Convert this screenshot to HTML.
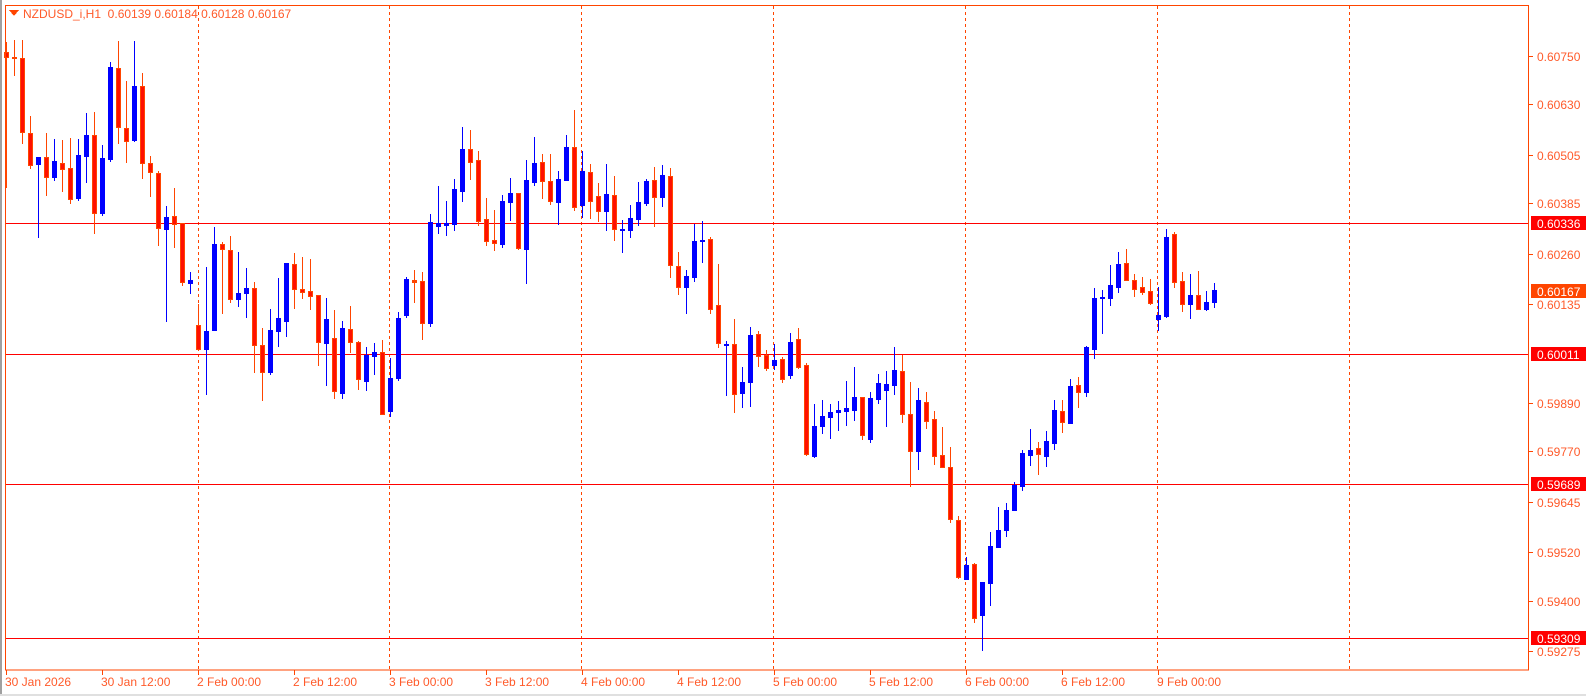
<!DOCTYPE html>
<html><head><meta charset="utf-8">
<style>
html,body{margin:0;padding:0;background:#fff;}
svg{display:block;font-family:"Liberation Sans",sans-serif;font-size:12px;}
</style></head>
<body>
<svg id="c" width="1586" height="696" xmlns="http://www.w3.org/2000/svg" shape-rendering="crispEdges">
<rect x="0" y="0" width="1586" height="696" fill="#fff"/>
<rect x="0" y="0" width="2" height="696" fill="#a0a0a0"/>
<rect x="0" y="694" width="1586" height="2" fill="#e0e0e0"/>
<g id="grid"></g>
<g id="hl"></g>
<g id="cs"></g>
<rect x="5.5" y="5.5" width="1523" height="664.5" fill="none" stroke="#ff4500" stroke-width="1"/>
<g id="ax"></g>
<polygon points="9,10 19,10 14,16" fill="#ff4500"/>
<text x="23" y="18" fill="#ff5a2a" style="white-space:pre">NZDUSD_i,H1  0.60139 0.60184 0.60128 0.60167</text>
</svg>
<script>
var NS="http://www.w3.org/2000/svg";
function el(p,t,a,txt){var e=document.createElementNS(NS,t);for(var k in a)e.setAttribute(k,a[k]);if(txt!==undefined)e.textContent=txt;document.getElementById(p).appendChild(e);return e;}
var gx=[198,389,581,773,965,1157,1349];
gx.forEach(function(x){el("grid","line",{x1:x+.5,y1:6,x2:x+.5,y2:670,stroke:"#ff4500","stroke-dasharray":"3,3"});});
function Y(p){return 223+(0.60336-p)*40350;}
[223,354,484,638].forEach(function(y){el("hl","line",{x1:5,y1:y+.5,x2:1529,y2:y+.5,stroke:"#ff0000"});});
var D=`r 52 57 42 187
r 57 57 40 75
r 58 132 40 143
r 133 165 116 168
b 157 164 157 237
r 157 177 133 195
b 161 177 139 180
r 163 169 140 191
r 168 199 138 203
b 155 198 139 200
b 135 156 113 182
r 135 213 112 233
b 158 213 145 215
b 67 159 62 161
r 68 127 41 143
r 128 141 81 162
b 86 140 41 141
r 86 163 73 178
r 163 172 156 196
r 173 228 171 245
b 217 229 206 321
r 216 224 188 247
r 223 282 223 285
b 280 283 272 293
r 325 349 304 349
b 331 349 267 394
b 244 330 227 330
r 244 249 242 313
r 250 299 236 302
b 293 299 252 306
b 288 293 268 317
r 288 345 282 372
r 345 372 328 400
b 330 372 309 374
b 318 331 278 346
b 263 321 263 336
r 264 289 253 308
r 289 292 257 298
r 291 296 259 309
r 295 342 295 365
b 319 343 298 385
r 338 391 310 398
b 328 393 321 398
r 329 342 306 352
r 342 379 341 389
b 355 381 347 390
b 352 356 343 374
r 352 414 340 414
b 378 411 358 416
b 318 378 312 380
b 279 315 277 317
r 280 282 270 302
r 281 323 272 339
b 222 323 214 326
b 223 226 186 233
b 223 225 201 235
b 189 224 179 230
b 149 191 127 201
r 149 162 130 179
r 160 221 151 225
r 219 241 198 245
r 240 243 210 250
b 201 244 195 247
b 193 202 178 220
r 193 248 193 249
b 180 249 160 283
b 163 182 137 185
r 162 181 154 198
r 181 201 154 204
b 179 202 171 224
b 147 180 135 180
r 147 207 110 210
b 171 205 151 217
r 172 201 164 218
r 196 211 183 221
b 194 211 164 230
r 195 229 176 240
b 229 230 220 252
b 218 230 205 237
b 202 219 182 225
b 181 203 179 205
r 180 197 167 226
b 175 197 165 206
r 176 265 168 277
r 266 287 252 294
b 276 287 270 313
b 241 277 224 281
b 240 241 221 262
r 239 309 237 313
r 305 343 264 347
b 344 345 341 395
r 344 394 319 412
b 382 393 367 407
b 335 382 327 406
r 334 356 331 366
r 355 368 350 370
b 360 365 344 369
r 359 379 357 382
b 342 375 333 378
r 339 367 328 368
r 365 454 363 455
b 426 456 404 457
b 416 426 400 433
b 412 417 404 438
b 410 412 401 430
b 408 411 381 425
b 397 410 367 420
r 397 435 397 439
b 398 439 392 442
b 383 399 374 403
b 384 390 371 426
b 370 385 347 394
r 371 414 355 422
r 414 451 382 486
b 400 451 388 469
r 402 421 392 428
r 419 456 411 464
r 455 467 427 467
r 467 519 447 522
r 520 577 516 578
b 565 579 557 579
r 564 618 563 622
b 582 615 582 650
b 546 583 532 605
b 530 547 507 547
b 510 530 503 536
b 485 510 482 510
b 453 486 450 490
b 450 455 429 465
r 448 454 442 474
b 441 456 431 466
b 410 443 400 449
r 411 422 400 432
b 386 423 379 423
r 385 392 377 407
b 347 392 346 396
b 298 349 288 358
b 297 298 290 333
b 285 298 265 305
b 264 287 252 292
r 263 280 249 280
r 280 289 274 296
r 287 292 277 294
r 291 303 279 304
b 315 319 287 330
b 237 316 229 317
r 234 282 232 287
r 281 304 272 311
b 295 304 274 318
r 295 309 271 309
b 302 309 291 310
b 290 302 283 307`.split("\n");
D.forEach(function(l,i){var a=l.trim().split(/\s+/);var t=a[0],o=+a[1],c=+a[2],h=+a[3],lo=+a[4];var cx=6+8*i;
var col=t=="b"?"#0000ff":"#ff4500";
el("cs","rect",{x:cx,y:h,width:1,height:Math.max(1,lo-h+1),fill:col});
var hh=Math.max(1,c-o);
if(t=="b"){el("cs","rect",{x:cx-2,y:o,width:5,height:hh+1,fill:"#0000ff"});}
else{ if(hh<=2){el("cs","rect",{x:cx-2,y:o,width:5,height:hh+1,fill:"#ff4500"});}
 else{el("cs","rect",{x:cx-2,y:o,width:5,height:hh+1,fill:"#ff4500"});el("cs","rect",{x:cx-1,y:o+1,width:3,height:hh-1,fill:"#ff1000"});}}
});
var lv=["0.60750","0.60630","0.60505","0.60385","0.60260","0.60135","0.59890","0.59770","0.59645","0.59520","0.59400","0.59275"];
lv.forEach(function(v){var y=Math.round(Y(+v));el("ax","rect",{x:1529,y:y,width:4,height:1,fill:"#ff4500"});el("ax","text",{x:1537,y:y+5,fill:"#ff5a2a"},v);});
[["0.60336",223,"#ff0000"],["0.60167",291,"#ff4500"],["0.60011",354,"#ff0000"],["0.59689",484,"#ff0000"],["0.59309",638,"#ff0000"]].forEach(function(a){
el("ax","rect",{x:1531,y:a[1]-7,width:55,height:14,fill:a[2]});el("ax","text",{x:1537,y:a[1]+5,fill:"#fff"},a[0]);});
var tl=["30 Jan 2026","30 Jan 12:00","2 Feb 00:00","2 Feb 12:00","3 Feb 00:00","3 Feb 12:00","4 Feb 00:00","4 Feb 12:00","5 Feb 00:00","5 Feb 12:00","6 Feb 00:00","6 Feb 12:00","9 Feb 00:00"];
tl.forEach(function(s,i){var x=6+96*i;el("ax","rect",{x:x,y:670,width:1,height:5,fill:"#ff4500"});el("ax","text",{x:x-1,y:686,fill:"#ff5a2a"},s);});
</script>
</body></html>
